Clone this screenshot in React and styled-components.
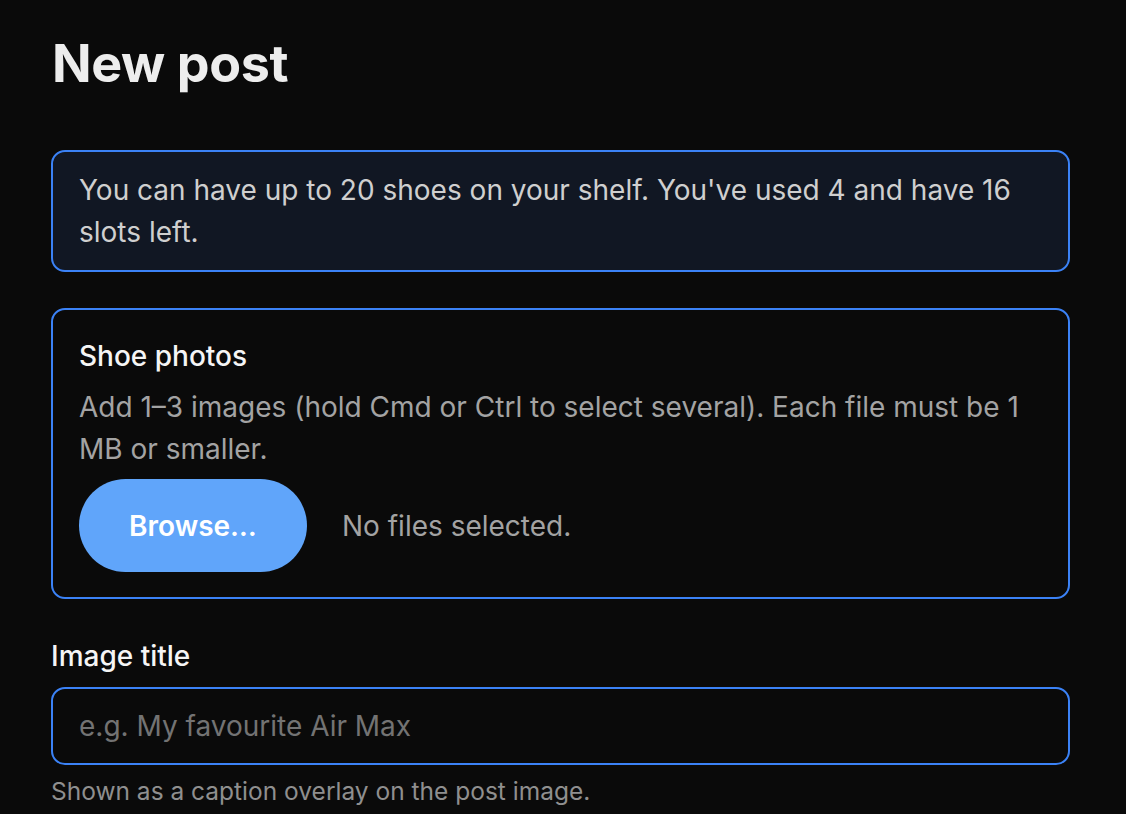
import React from "react";
import styled, { createGlobalStyle } from "styled-components";

const Global = createGlobalStyle`
  html, body {
    margin: 0;
    padding: 0;
    background: #0a0a0a;
  }
  body {
    font-family: Inter, "Noto Sans", "Liberation Sans", sans-serif;
    color: #f5f5f5;
    -webkit-font-smoothing: antialiased;
  }
  * { box-sizing: border-box; }
`;

const Page = styled.main`
  width: 1019px;
  margin-left: 51px;
  padding-top: 33px;
  display: flex;
  flex-direction: column;
`;

const Title = styled.h1`
  margin: 0 0 55px 1px;
  font-size: 52px;
  line-height: 62px;
  font-weight: 700;
  color: #ededed;
  letter-spacing: -0.4px;
`;

const Form = styled.form`
  display: flex;
  flex-direction: column;
  gap: 36px;
`;

const Notice = styled.div`
  border: 2px solid #3b82f6;
  border-radius: 14px;
  background: #111723;
  padding: 17px 26px;
  font-size: 28px;
  line-height: 42px;
  color: #cfcfcf;
`;

const Panel = styled.div`
  border: 2px solid #3b82f6;
  border-radius: 14px;
  padding: 25px 26px;
  display: flex;
  flex-direction: column;
  gap: 9px;
`;

const Label = styled.label`
  display: block;
  font-size: 28px;
  line-height: 42px;
  font-weight: 500;
  color: #f5f5f5;
`;

const Help = styled.p`
  margin: 0;
  font-size: 28px;
  line-height: 42px;
  color: #a3a3a3;
`;

const FileRow = styled.div`
  display: flex;
  align-items: center;
  gap: 35px;
`;

const BrowseButton = styled.button`
  border: none;
  border-radius: 999px;
  background: #60a5fa;
  color: #ffffff;
  font-family: inherit;
  font-size: 28px;
  line-height: 42px;
  font-weight: 600;
  width: 228px;
  height: 93px;
  padding: 0;
  cursor: pointer;
`;

const FileStatus = styled.span`
  font-size: 28px;
  line-height: 42px;
  color: #a3a3a3;
`;

const Field = styled.div`
  display: flex;
  flex-direction: column;
`;

const Input = styled.input`
  margin-top: 10px;
  width: 100%;
  height: 78px;
  border: 2px solid #3b82f6;
  border-radius: 14px;
  background: #0a0a0a;
  padding: 0 26px;
  font-family: inherit;
  font-size: 28px;
  color: #f5f5f5;
  outline: none;
  &::placeholder {
    color: #737373;
  }
`;

const Caption = styled.p`
  margin: 8px 0 0;
  font-size: 24.5px;
  line-height: 37px;
  color: #8f8f8f;
`;

export default function App() {
  return (
    <>
      <Global />
      <Page>
        <Title>New post</Title>
        <Form onSubmit={(e) => e.preventDefault()}>
          <Notice>
            You can have up to 20 shoes on your shelf. You've used 4 and have 16 slots left.
          </Notice>
          <Panel>
            <Label>Shoe photos</Label>
            <Help>
              Add 1–3 images (hold Cmd or Ctrl to select several). Each file must be 1 MB or smaller.
            </Help>
            <FileRow>
              <BrowseButton type="button">Browse…</BrowseButton>
              <FileStatus>No files selected.</FileStatus>
            </FileRow>
          </Panel>
          <Field>
            <Label htmlFor="title">Image title</Label>
            <Input id="title" placeholder="e.g. My favourite Air Max" />
            <Caption>Shown as a caption overlay on the post image.</Caption>
          </Field>
        </Form>
      </Page>
    </>
  );
}
